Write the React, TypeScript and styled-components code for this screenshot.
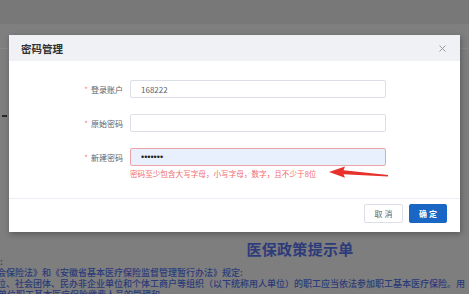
import styled, { createGlobalStyle } from 'styled-components'

const GlobalStyle = createGlobalStyle`
  html, body { margin: 0; padding: 0; }
  body { font-family: "Noto Sans CJK SC", "Noto Sans", sans-serif; overflow: hidden; }
  * { box-sizing: border-box; }
`

export default function App() {
  return (
    <>
      <GlobalStyle />
      <Page>
        <TopBand />
        <SubBand />
        <DocArea>
          <Dash />
          <DocTitle>医保政策提示单</DocTitle>
          <DocLine>:</DocLine>
          <DocLine $shift={-12}>社会保险法》和《安徽省基本医疗保险监督管理暂行办法》规定:</DocLine>
          <DocLine $shift={-3}>位、社会团体、民办非企业单位和个体工商户等组织（以下统称用人单位）的职工应当依法参加职工基本医疗保险。用</DocLine>
          <DocLine $shift={-2}>单位职工基本医疗保险缴费人员的管理和</DocLine>
        </DocArea>

        <Dialog>
          <Header>
            <Title>密码管理</Title>
            <CloseBtn aria-label="close">
              <svg width="7" height="7" viewBox="0 0 7 7">
                <path d="M0.5 0.5 L6.5 6.5 M6.5 0.5 L0.5 6.5" stroke="#9a9ca3" strokeWidth="1" />
              </svg>
            </CloseBtn>
          </Header>
          <Body>
            <FormRow>
              <Label><Star>*</Star>登录账户</Label>
              <Field defaultValue="168222" readOnly />
            </FormRow>
            <FormRow>
              <Label><Star>*</Star>原始密码</Label>
              <Field readOnly />
            </FormRow>
            <FormRow $last>
              <Label><Star>*</Star>新建密码</Label>
              <Field type="password" defaultValue="1234567" readOnly $error />
            </FormRow>
            <ErrorText>密码至少包含大写字母，小写字母，数字，且不少于8位</ErrorText>
          </Body>
          <Footer>
            <Button>取 消</Button>
            <Button $primary>确 定</Button>
          </Footer>
        </Dialog>

        <Arrow width="64" height="16" viewBox="0 0 64 16">
          <polygon points="3,8 19,2.5 17.5,6.2 62,11 62,12.6 17.5,10.3 19,13.8" fill="#e8312a" />
        </Arrow>
      </Page>
    </>
  )
}

const Page = styled.div`
  position: relative;
  width: 469px;
  height: 294px;
  background: #7e7e7e;
  overflow: hidden;
`

const TopBand = styled.div`
  height: 24px;
  background: #787878;
`

const SubBand = styled.div`
  height: 25px;
  background: #7f7f7f;
  border-bottom: 1px solid #888888;
`

const DocArea = styled.div`
  width: 600px;
  padding-top: 192px;
  color: #2b3a78;
`

const Dash = styled.div`
  position: absolute;
  left: 2px;
  top: 115px;
  width: 5px;
  height: 2px;
  background: #2a2a2a;
`

const DocTitle = styled.div`
  text-align: center;
  font-size: 15px;
  font-weight: 700;
  line-height: 15px;
  letter-spacing: 0.3px;
  color: #2d3b7b;
`

const DocLine = styled.div<{ $shift?: number }>`
  margin-left: ${(p) => p.$shift ?? 0}px;
  font-size: 9px;
  line-height: 11px;
  white-space: nowrap;
  color: #2b3a7a;
  font-weight: 500;
`

const Dialog = styled.div`
  position: absolute;
  left: 9px;
  top: 35px;
  width: 451px;
  background: #ffffff;
  box-shadow: 1px 2px 6px rgba(0, 0, 0, 0.3);
`

const Header = styled.div`
  height: 26px;
  background: #eff1f4;
  display: flex;
  align-items: center;
  justify-content: space-between;
  padding: 0 14px 0 12px;
`

const Title = styled.div`
  font-size: 10.5px;
  font-weight: 600;
  color: #303133;
`

const CloseBtn = styled.button`
  border: none;
  background: none;
  padding: 0;
  display: flex;
  margin-top: 1px;
`

const Body = styled.div`
  padding: 19px 0 18px;
`

const FormRow = styled.div<{ $last?: boolean }>`
  display: flex;
  align-items: center;
  margin-bottom: ${(p) => (p.$last ? '2px' : '16px')};
`

const Label = styled.label`
  width: 121px;
  padding-right: 7px;
  text-align: right;
  font-size: 8px;
  color: #606266;
`

const Star = styled.span`
  color: #f2898a;
  margin-right: 3px;
`

const Field = styled.input<{ $error?: boolean }>`
  width: 256px;
  height: 18px;
  border: 1px solid ${(p) => (p.$error ? '#f0a3a6' : '#dcdfe6')};
  border-radius: 2px;
  background: ${(p) => (p.$error ? '#e8f0fe' : '#ffffff')};
  padding: 0 10px;
  font-family: ${(p) => (p.$error ? '"Liberation Sans", sans-serif' : '"Noto Sans CJK SC", sans-serif')};
  font-size: ${(p) => (p.$error ? '9px' : '8px')};
  color: ${(p) => (p.$error ? '#222222' : '#606266')};
  outline: none;
`

const ErrorText = styled.div`
  margin-left: 121px;
  font-size: 7.6px;
  line-height: 12px;
  color: #f26b6b;
`

const Footer = styled.div`
  border-top: 1px solid #ebeef5;
  padding: 5px 13px 9px;
  display: flex;
  justify-content: flex-end;
  gap: 6px;
`

const Button = styled.button<{ $primary?: boolean }>`
  width: ${(p) => (p.$primary ? '38px' : '39px')};
  height: 19px;
  padding: 0;
  border-radius: 2px;
  border: 1px solid ${(p) => (p.$primary ? '#1a66c4' : '#dcdfe6')};
  background: ${(p) => (p.$primary ? '#1a66c4' : '#ffffff')};
  color: ${(p) => (p.$primary ? '#ffffff' : '#606266')};
  font-family: "Noto Sans CJK SC", sans-serif;
  font-size: 8px;
  font-weight: ${(p) => (p.$primary ? 700 : 400)};
`

const Arrow = styled.svg`
  position: absolute;
  left: 326px;
  top: 164px;
`
